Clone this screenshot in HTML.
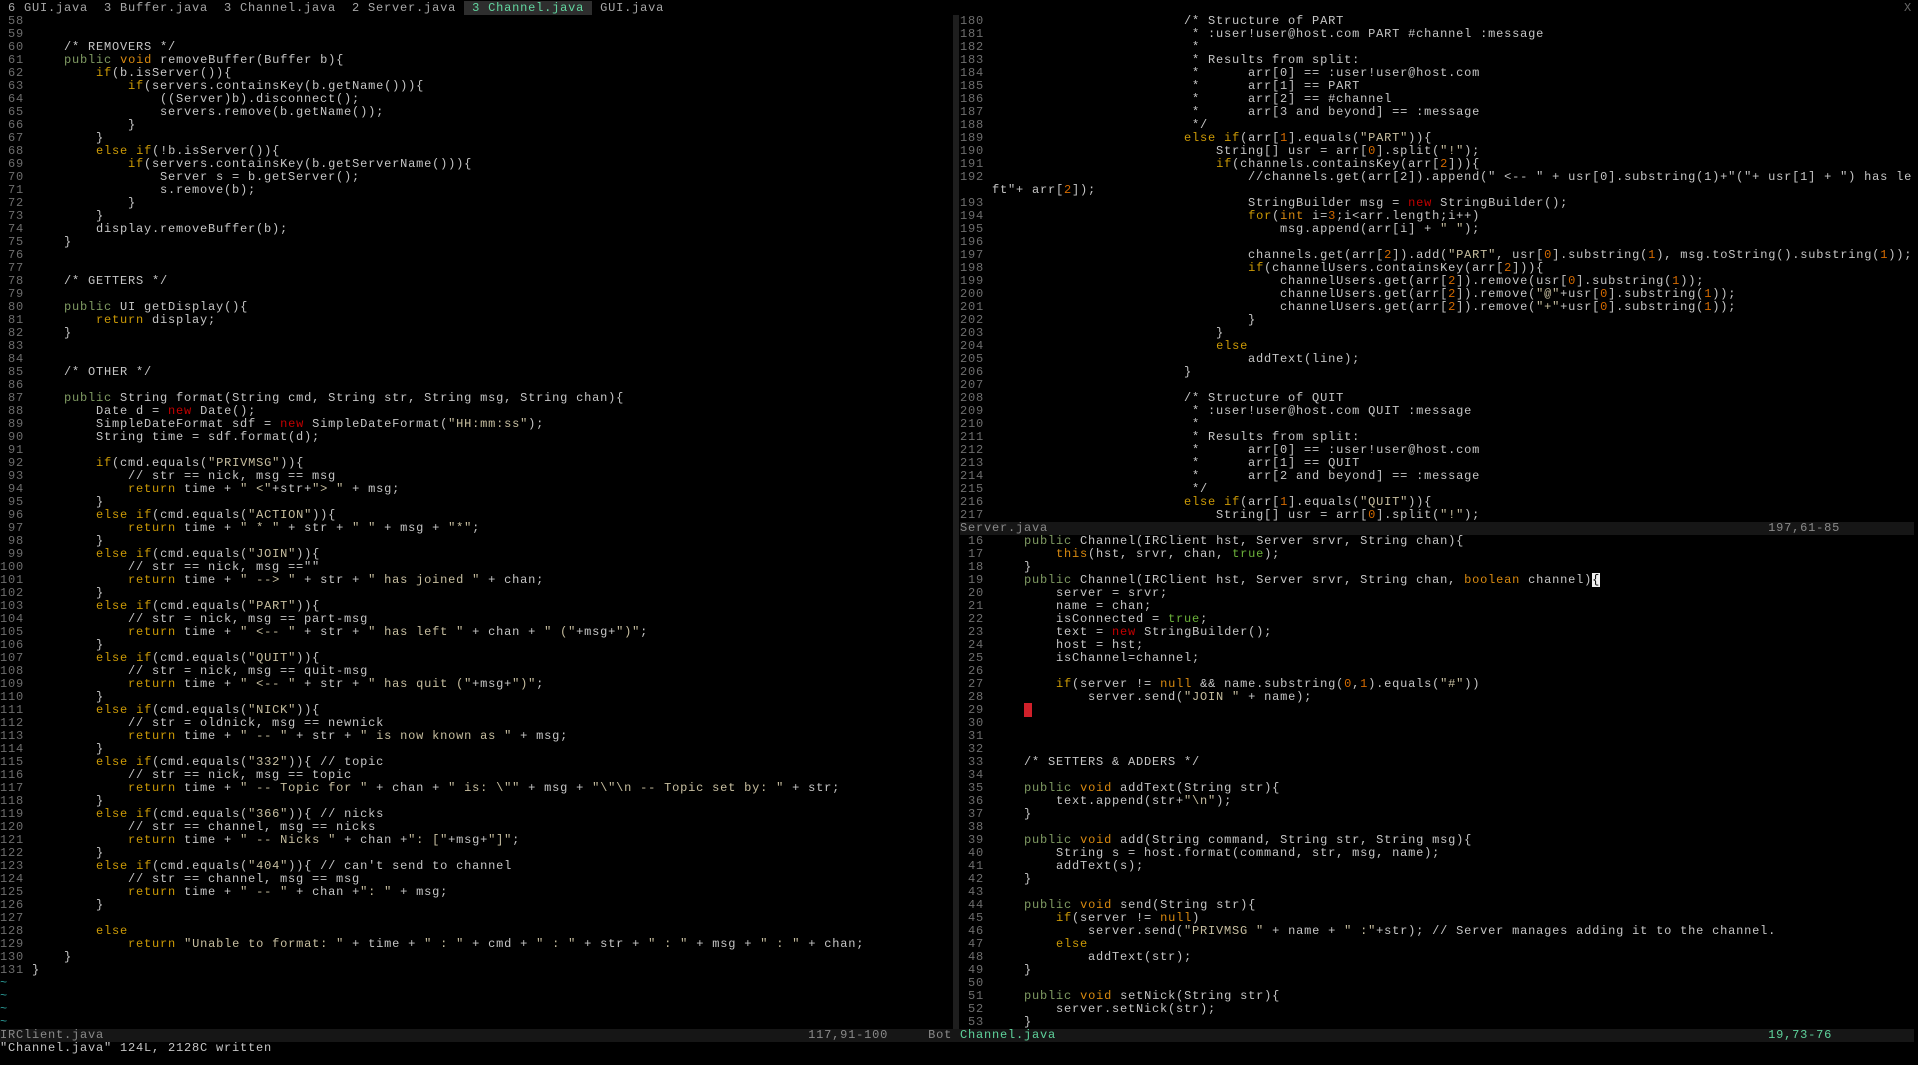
<!DOCTYPE html>
<html><head><meta charset="utf-8"><style>
html,body{margin:0;padding:0;background:#000;width:1918px;height:1065px;overflow:hidden}
body{position:relative;font-family:"Liberation Mono","DejaVu Sans Mono",monospace;font-size:12px;letter-spacing:0.8px;color:#c6c6c6}
#w{position:absolute;left:0;top:2px;width:1918px;height:1063px}
.row,.pane div{height:13px;line-height:13px;white-space:pre}
.pane{position:absolute;margin:0;font:inherit;white-space:pre;overflow:hidden}
.abs{position:absolute;white-space:pre;height:13px;line-height:13px}
.n{color:#6e6e6e}.p{color:#7f9a62}.o{color:#d98a10}.k{color:#cc9a06}.r{color:#c40000}.d{color:#d46a00}.t{color:#6cb23a}.s{color:#c8bfa0}
.cur{background:#f0f0f0;color:#000}
.red{background:#d0202a;color:#000}
.st{position:absolute;height:13px;line-height:13px;background:#161616;white-space:pre}
</style></head><body><div id="w">
<div class="abs" style="left:0;top:0;width:1918px;color:#a8a8a8"> 6 GUI.java  3 Buffer.java  3 Channel.java  2 Server.java <span style="background:#2e2e2e;color:#62d6a0"> 3 Channel.java </span> GUI.java</div>
<div class="abs" style="left:1904px;top:0;color:#666">X</div>
<div style="position:absolute;left:953px;top:13px;width:6px;height:1014px;background:#1e1e1e"></div>
<pre class="pane" style="left:0;top:13px;width:952px"> 58 
 59 
 60     /* REMOVERS */
 61     public void removeBuffer(Buffer b){
 62         if(b.isServer()){
 63             if(servers.containsKey(b.getName())){
 64                 ((Server)b).disconnect();
 65                 servers.remove(b.getName());
 66             }
 67         }
 68         else if(!b.isServer()){
 69             if(servers.containsKey(b.getServerName())){
 70                 Server s = b.getServer();
 71                 s.remove(b);
 72             }
 73         }
 74         display.removeBuffer(b);
 75     }
 76 
 77 
 78     /* GETTERS */
 79 
 80     public UI getDisplay(){
 81         return display;
 82     }
 83 
 84 
 85     /* OTHER */
 86 
 87     public String format(String cmd, String str, String msg, String chan){
 88         Date d = new Date();
 89         SimpleDateFormat sdf = new SimpleDateFormat("HH:mm:ss");
 90         String time = sdf.format(d);
 91 
 92         if(cmd.equals("PRIVMSG")){
 93             // str == nick, msg == msg
 94             return time + " &lt;"+str+"&gt; " + msg;
 95         }
 96         else if(cmd.equals("ACTION")){
 97             return time + " * " + str + " " + msg + "*";
 98         }
 99         else if(cmd.equals("JOIN")){
100             // str == nick, msg ==""
101             return time + " --&gt; " + str + " has joined " + chan;
102         }
103         else if(cmd.equals("PART")){
104             // str = nick, msg == part-msg
105             return time + " &lt;-- " + str + " has left " + chan + " ("+msg+")";
106         }
107         else if(cmd.equals("QUIT")){
108             // str = nick, msg == quit-msg
109             return time + " &lt;-- " + str + " has quit ("+msg+")";
110         }
111         else if(cmd.equals("NICK")){
112             // str = oldnick, msg == newnick
113             return time + " -- " + str + " is now known as " + msg;
114         }
115         else if(cmd.equals("332")){ // topic
116             // str == nick, msg == topic
117             return time + " -- Topic for " + chan + " is: \"" + msg + "\"\n -- Topic set by: " + str;
118         }
119         else if(cmd.equals("366")){ // nicks
120             // str == channel, msg == nicks
121             return time + " -- Nicks " + chan +": ["+msg+"]";
122         }
123         else if(cmd.equals("404")){ // can't send to channel
124             // str == channel, msg == msg
125             return time + " -- " + chan +": " + msg;
126         }
127 
128         else
129             return "Unable to format: " + time + " : " + cmd + " : " + str + " : " + msg + " : " + chan;
130     }
131 }</pre>
<div class="abs" style="left:0;top:975px;color:#2a9a96">~</div>
<div class="abs" style="left:0;top:988px;color:#2a9a96">~</div>
<div class="abs" style="left:0;top:1001px;color:#2a9a96">~</div>
<div class="abs" style="left:0;top:1014px;color:#2a9a96">~</div>
<pre class="pane" style="left:960px;top:13px;width:954px">180                         /* Structure of PART
181                          * :user!user@host.com PART #channel :message
182                          *
183                          * Results from split:
184                          *      arr[0] == :user!user@host.com
185                          *      arr[1] == PART
186                          *      arr[2] == #channel
187                          *      arr[3 and beyond] == :message
188                          */
189                         else if(arr[1].equals("PART")){
190                             String[] usr = arr[0].split("!");
191                             if(channels.containsKey(arr[2])){
192                                 //channels.get(arr[2]).append(" &lt;-- " + usr[0].substring(1)+"("+ usr[1] + ") has le
    ft"+ arr[2]);
193                                 StringBuilder msg = new StringBuilder();
194                                 for(int i=3;i&lt;arr.length;i++)
195                                     msg.append(arr[i] + " ");
196 
197                                 channels.get(arr[2]).add("PART", usr[0].substring(1), msg.toString().substring(1));
198                                 if(channelUsers.containsKey(arr[2])){
199                                     channelUsers.get(arr[2]).remove(usr[0].substring(1));
200                                     channelUsers.get(arr[2]).remove("@"+usr[0].substring(1));
201                                     channelUsers.get(arr[2]).remove("+"+usr[0].substring(1));
202                                 }
203                             }
204                             else
205                                 addText(line);
206                         }
207 
208                         /* Structure of QUIT
209                          * :user!user@host.com QUIT :message
210                          *
211                          * Results from split:
212                          *      arr[0] == :user!user@host.com
213                          *      arr[1] == QUIT
214                          *      arr[2 and beyond] == :message
215                          */
216                         else if(arr[1].equals("QUIT")){
217                             String[] usr = arr[0].split("!");</pre>
<div class="st" style="left:960px;top:520px;width:954px;color:#8a8a8a">Server.java                                                                                          197,61-85              32%</div>
<pre class="pane" style="left:960px;top:533px;width:954px"> 16     public Channel(IRClient hst, Server srvr, String chan){
 17         this(hst, srvr, chan, true);
 18     }
 19     public Channel(IRClient hst, Server srvr, String chan, boolean channel){
 20         server = srvr;
 21         name = chan;
 22         isConnected = true;
 23         text = new StringBuilder();
 24         host = hst;
 25         isChannel=channel;
 26 
 27         if(server != null &amp;&amp; name.substring(0,1).equals("#"))
 28             server.send("JOIN " + name);
 29     
 30 
 31 
 32 
 33     /* SETTERS &amp; ADDERS */
 34 
 35     public void addText(String str){
 36         text.append(str+"\n");
 37     }
 38 
 39     public void add(String command, String str, String msg){
 40         String s = host.format(command, str, msg, name);
 41         addText(s);
 42     }
 43 
 44     public void send(String str){
 45         if(server != null)
 46             server.send("PRIVMSG " + name + " :"+str); // Server manages adding it to the channel.
 47         else
 48             addText(str);
 49     }
 50 
 51     public void setNick(String str){
 52         server.setNick(str);
 53     }</pre>
<div class="st" style="left:0;top:1027px;width:952px;color:#8a8a8a">IRClient.java                                                                                        117,91-100     Bot</div>
<div class="st" style="left:952px;top:1027px;width:962px;color:#5fd39c"> Channel.java                                                                                         19,73-76               17%</div>
<div class="abs" style="left:0;top:1040px;color:#c6c6c6">"Channel.java" 124L, 2128C written</div>
</div>
<script>
function esc(s){return s.replace(/&/g,'&amp;').replace(/</g,'&lt;').replace(/>/g,'&gt;');}
var re=/("(?:[^"\\]|\\.)*")|\b(public)\b|\b(void|boolean|int|this|null)\b|\b(if|else|for|return)\b|\b(new)\b|\b(true)\b|\b(\d+)\b/g;
var cls=[null,'s','p','o','k','r','t','d'];
function hl(code){
  var t=code.trim();
  if(t.indexOf('*')==0||t.indexOf('/*')==0||t.indexOf('//')==0) return esc(code);
  var out='',last=0,m;re.lastIndex=0;
  while((m=re.exec(code))){
    out+=esc(code.slice(last,m.index));
    for(var i=1;i<8;i++) if(m[i]!==undefined){out+='<span class="'+cls[i]+'">'+esc(m[0])+'</span>';break;}
    last=re.lastIndex;
  }
  return out+esc(code.slice(last));
}
var panes=document.querySelectorAll('pre.pane');
for(var p=0;p<panes.length;p++){
  var lines=panes[p].textContent.split('\n'),h='';
  for(var j=0;j<lines.length;j++){
    var l=lines[j],m=l.match(/^( *\d+ )(.*)$/),body;
    if(m){
      var code=hl(m[2]);
      if(p==2&&m[1]==' 19 ') code=code.replace(/\{$/,'<span class="cur">{</span>');
      if(p==2&&m[1]==' 29 ') code='    <span class="red"> </span>';
      body='<span class="n">'+esc(m[1])+'</span>'+code;
    } else body=hl(l);
    h+='<div>'+body+'</div>';
  }
  panes[p].innerHTML=h;
}
</script>
</body></html>
